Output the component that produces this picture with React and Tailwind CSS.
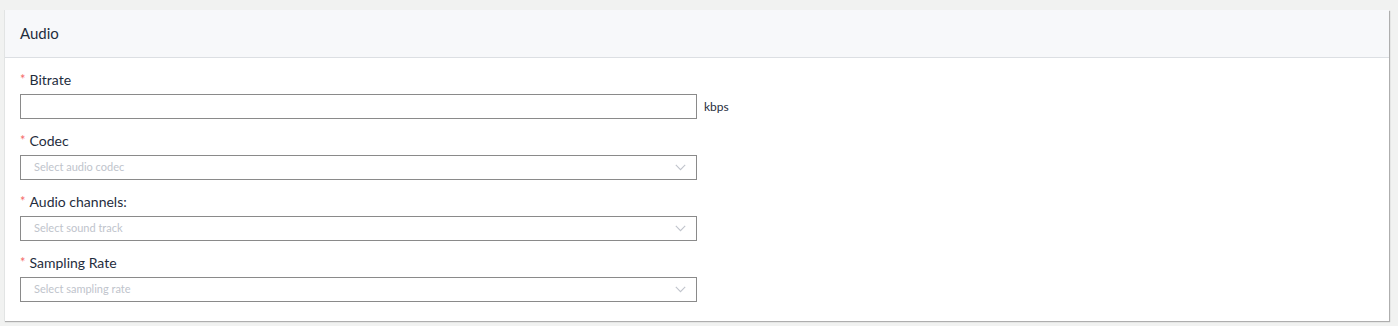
import React from "react";

function Chevron() {
  return (
    <svg width="11" height="7" viewBox="0 0 11 7" fill="none" className="shrink-0">
      <path d="M0.8 0.8 L5.5 5.6 L10.2 0.8" stroke="#c0c4cc" strokeWidth="1.1" />
    </svg>
  );
}

function Label({ children }) {
  return (
    <div className="flex items-center h-[20px] text-[14px] text-[#1f2d3d] leading-none">
      <span className="text-[#f56c6c] text-[13px] mr-[4px] -mt-[2px]">*</span>
      <span>{children}</span>
    </div>
  );
}

function SelectBox({ placeholder }) {
  return (
    <div className="w-[677px] h-[25px] border border-[#8a8a8a] bg-white flex items-center justify-between pl-[13px] pr-[10px]">
      <span className="text-[11px] text-[#c0c4cc]">{placeholder}</span>
      <Chevron />
    </div>
  );
}

function Field({ label, children }) {
  return (
    <div className="flex flex-col gap-[4px]">
      <Label>{label}</Label>
      {children}
    </div>
  );
}

export default function App() {
  return (
    <div
      className="w-[1398px] h-[326px] bg-[#f1f2f1] pt-[10px] pl-[4px] pr-[9px]"
      style={{ fontFamily: "Lato, 'Noto Sans', sans-serif" }}
    >
      <div className="bg-white border-l border-[#e2e4e4] h-[311px] shadow-[1px_1px_1px_rgba(0,0,0,0.28)]">
        <div className="h-[48px] bg-[#f7f8fa] border-b border-[#dcdfe3] flex items-center pl-[15px] text-[15px] text-[#1f2d3d]">
          Audio
        </div>
        <div className="pl-[15px] pt-[12px] flex flex-col gap-[12px]">
          <Field label="Bitrate">
            <div className="flex items-center">
              <div className="w-[677px] h-[25px] border border-[#8a8a8a] bg-white" />
              <span className="ml-[7px] text-[12px] text-[#1f2d3d]">kbps</span>
            </div>
          </Field>
          <Field label="Codec">
            <SelectBox placeholder="Select audio codec" />
          </Field>
          <Field label="Audio channels:">
            <SelectBox placeholder="Select sound track" />
          </Field>
          <Field label="Sampling Rate">
            <SelectBox placeholder="Select sampling rate" />
          </Field>
        </div>
      </div>
    </div>
  );
}
